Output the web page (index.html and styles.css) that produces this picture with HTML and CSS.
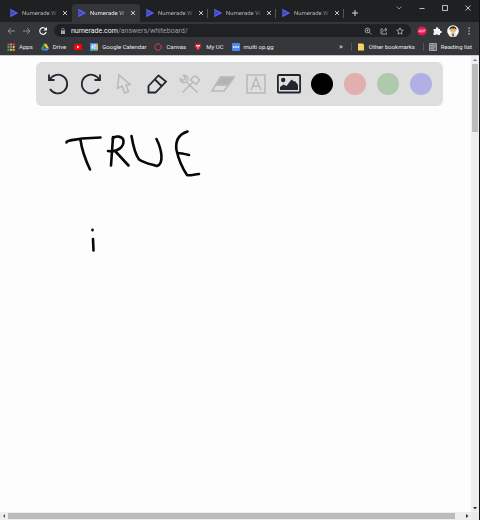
FILE: index.html
```html
<!DOCTYPE html>
<html lang="en">
<head>
<meta charset="utf-8">
<title>Numerade Whiteboard</title>
<link rel="stylesheet" href="styles.css">
</head>
<body>
<svg class="defs" aria-hidden="true">
  <symbol id="logo" viewBox="0 0 10 10"><path d="M1.200 .8v8.400L9.400 5z" fill="#565cf5"/><path d="M.8 3.500l4.500 1.500-4.500 1.500" stroke="#2b2d4a" stroke-width=".5" fill="none"/></symbol>
  <symbol id="close" viewBox="0 0 6 6"><path d="M1 1l4 4M5 1L1 5" stroke="#d8dadd" stroke-width=".9"/></symbol>
</svg>
<div class="browser">
  <header class="chrome">
    <div class="tabstrip">
      <nav class="tabs" aria-label="Tabs">
        <div class="tab"><svg class="fav"><use href="#logo"/></svg><a href="#" class="name">Numerade W</a><button class="x" aria-label="Close tab"><svg><use href="#close"/></svg></button></div>
        <div class="tab active"><svg class="fav"><use href="#logo"/></svg><a href="#" class="name">Numerade W</a><button class="x" aria-label="Close tab"><svg><use href="#close"/></svg></button></div>
        <div class="tab sep"><svg class="fav"><use href="#logo"/></svg><a href="#" class="name">Numerade W</a><button class="x" aria-label="Close tab"><svg><use href="#close"/></svg></button></div>
        <div class="tab sep"><svg class="fav"><use href="#logo"/></svg><a href="#" class="name">Numerade W</a><button class="x" aria-label="Close tab"><svg><use href="#close"/></svg></button></div>
        <div class="tab sep"><svg class="fav"><use href="#logo"/></svg><a href="#" class="name">Numerade W</a><button class="x" aria-label="Close tab"><svg><use href="#close"/></svg></button></div>
        <button class="new" aria-label="New tab"><svg viewBox="0 0 8 8"><path d="M4 1v6M1 4h6" stroke="#d8dadd"/></svg></button>
      </nav>
      <div class="window">
        <button aria-label="Search tabs"><svg viewBox="0 0 8 8"><path d="M1.500 2.500L4 5l2.500-2.500" stroke="#aaadb0" fill="none" stroke-width=".8"/></svg></button>
        <button aria-label="Minimize"><svg viewBox="0 0 8 8"><path d="M1.500 4.500h5" stroke="#e4e4e4" stroke-width=".8"/></svg></button>
        <button aria-label="Maximize"><svg viewBox="0 0 8 8"><path d="M1.500 1.500h5v5h-5z" stroke="#e4e4e4" fill="none" stroke-width=".8"/></svg></button>
        <button aria-label="Close"><svg viewBox="0 0 8 8"><path d="M1.500 1.500l5 5M6.500 1.500l-5 5" stroke="#eee" stroke-width=".8"/></svg></button>
      </div>
    </div>
    <div class="address">
      <div class="nav">
        <button aria-label="Back"><svg viewBox="0 0 10 10"><path d="M9 5H2M5 2L2 5l3 3" stroke="#8b8d91" fill="none"/></svg></button>
        <button aria-label="Forward"><svg viewBox="0 0 10 10"><path d="M1 5h7M5 2l3 3-3 3" stroke="#8b8d91" fill="none"/></svg></button>
        <button aria-label="Reload"><svg viewBox="0 0 10 10"><path d="M8 3.500A3.300 3.300 0 1 0 8.200 6" stroke="#f1f1f1" fill="none" stroke-width="1.200"/><path d="M9 1v3.500H5.500z" fill="#f1f1f1"/></svg></button>
      </div>
      <div class="omnibox">
        <svg class="i8" viewBox="0 0 8 8"><path d="M2 3.500h4v3.500H2z" fill="#a4a7ab"/><path d="M2.800 4V2.500a1.200 1.200 0 0 1 2.400 0V4" stroke="#a4a7ab" fill="none" stroke-width=".7"/></svg>
        <a href="#" class="url"><b>numerade.com</b>/answers/whiteboard/</a>
        <div class="actions">
          <button aria-label="Zoom"><svg viewBox="0 0 8 8"><circle cx="3.500" cy="3.500" r="2.400" stroke="#b9bcc0" fill="none" stroke-width=".8"/><path d="M5.300 5.300L7.500 7.500M2.300 3.500h2.400M3.500 2.300v2.400" stroke="#b9bcc0" stroke-width=".7"/></svg></button>
          <button aria-label="Share"><svg viewBox="0 0 8 8"><path d="M3 2H1v5h5.500V5.500M2.500 5.500C2.500 3.500 4 2.700 6 2.700M5 1l2 1.700-2 1.800" stroke="#b9bcc0" fill="none" stroke-width=".8"/></svg></button>
          <button aria-label="Bookmark"><svg viewBox="0 0 8 8"><path d="M4 .8l.9 2.200 2.400.2-1.800 1.600.5 2.400L4 6l-2 1.200.5-2.400L.7 3.200l2.400-.2z" stroke="#c9ccd0" fill="none" stroke-width=".7"/></svg></button>
        </div>
      </div>
      <div class="ext">
        <button aria-label="Ad blocker"><svg viewBox="0 0 10 10"><path d="M3 .8h4L9.500 3v4L7 9.200H3L.5 7V3z" fill="#e8174b"/><path d="M2 6.300V4.500l.7-.7.700.7v1.800M2 5.400h1.400M4.400 6.300V3.800h.8l.5.6-.5.600.5.700-.5.600zM6.700 6.300V3.800h1v1.300h-1" stroke="#fff" stroke-width=".5" fill="none"/></svg></button>
        <button aria-label="Extensions"><svg viewBox="0 0 10 10"><path d="M1.500 3H4a1.200 1.200 0 1 1 2.200 0H8v2a1.200 1.200 0 1 1 0 2v2H5.800a1.200 1.200 0 0 0-2.200 0H1.500V6.800a1.100 1.100 0 0 0 0-2z" fill="#f4f4f4"/></svg></button>
        <button class="avatar" aria-label="Profile"><svg viewBox="0 0 12 12"><circle cx="6" cy="6" r="5.800" fill="#fff"/><path d="M2 11c.3-2.500 2-3 4-3s3.700.5 4 3c-2 1.500-6 1.500-8 0z" fill="#eee5d0"/><circle cx="6" cy="5" r="3" fill="#f0bd83"/><path d="M2.500 5C2 0 10 0 9.500 5L8 3.500 4 3.400z" fill="#3a241a"/><path d="M6 8.500v3" stroke="#26211e" stroke-width="1.200"/><path d="M4.700 5h.6M6.700 5h.6" stroke="#4a2c1c" stroke-width=".6"/></svg></button>
        <button aria-label="Menu"><svg viewBox="0 0 10 10"><path d="M4.500 1.500h1.200v1.200H4.500zM4.500 4.400h1.200v1.200H4.500zM4.500 7.300h1.200v1.200H4.500z" fill="#eee"/></svg></button>
      </div>
    </div>
    <nav class="bookmarks" aria-label="Bookmarks">
      <a href="#"><svg viewBox="0 0 8 8"><path d="M.5 .5h2v2h-2z" fill="#e94b3d"/><path d="M3.100 .5h2v2h-2z" fill="#e98b3d"/><path d="M5.700 .5h2v2h-2z" fill="#e94b3d"/><path d="M.5 3.100h2v2h-2zM.5 5.700h2v2h-2z" fill="#3daa5c"/><path d="M3.100 3.100h2v2h-2z" fill="#4c8bf5"/><path d="M5.700 3.100h2v2h-2zM3.100 5.700h2v2h-2zM5.700 5.700h2v2h-2z" fill="#f3bd35"/></svg>Apps</a>
      <a href="#"><svg viewBox="0 0 8 8"><path d="M2.800.7L0 5.500l1.400 2L4.200 3z" fill="#24a466"/><path d="M2.800.7h2.600L8 5.500H5.300z" fill="#fbc52c"/><path d="M2.700 5.500H8L6.700 7.500H1.400z" fill="#4c85ed"/></svg>Drive</a>
      <a href="#" aria-label="YouTube"><svg viewBox="0 0 8 8"><rect y="1" width="8" height="6" rx="1.500" fill="#f00"/><path d="M3 2.600v2.800L5.500 4z" fill="#fff"/></svg></a>
      <a href="#"><svg viewBox="0 0 8 8"><path d="M0 0h8v8H0z" fill="#4285f4"/><path d="M1.500 1.500h5v5h-5z" fill="#fff"/><path d="M6.500 1.500H8v5H6.500z" fill="#fbbc04"/><path d="M1.500 6.500h5V8h-5z" fill="#34a853"/><path d="M2.500 2.500h1.300v3H2.500M5.300 2.500v3.300" stroke="#4285f4" stroke-width=".7" fill="none"/></svg>Google Calendar</a>
      <a href="#"><svg viewBox="0 0 8 8"><circle cx="4" cy="4" r="3.200" fill="none" stroke="#e23b36" stroke-width="1.100" stroke-dasharray="2 .5"/></svg>Canvas</a>
      <a href="#"><svg viewBox="0 0 8 8"><path d="M1 .5h6l.5 3.500L4 8 .5 4z" fill="#c3202e"/><path d="M2 2h4v1.500H2zM3 4.500h2L4 6z" fill="#f7dede"/></svg>My UC</a>
      <a href="#"><svg viewBox="0 0 8 8"><rect width="8" height="8" rx="1" fill="#4e86f5"/><path d="M1 4h1.500M3.200 4h1.600M5.500 4H7" stroke="#fff" stroke-width="1.400"/></svg>multi op.gg</a>
      <span class="more">»</span>
      <a href="#" class="rule"><svg viewBox="0 0 8 8"><path d="M1 .5h4.500l1.500 1V7.500H1z" fill="#fbd467"/><path d="M5.500.5v7" stroke="#e6b53e" stroke-width=".5"/></svg>Other bookmarks</a>
      <a href="#" class="rule"><svg viewBox="0 0 8 8"><path d="M.5.5h7v7h-7z" fill="#686a70" stroke="#b4b7be" stroke-width=".8"/><path d="M4 1v6M1.500 2.500h1.800M1.500 4h1.800M1.500 5.500h1.800M5 2.500h1.500M5 4h1.500" stroke="#d3d6db" stroke-width=".6"/></svg>Reading list</a>
    </nav>
  </header>
  <div class="viewport">
    <main class="board">
      <div class="tools" role="toolbar" aria-label="Whiteboard tools">
        <button aria-label="Undo"><svg viewBox="0 0 24 24"><path d="M3 2.500v5.500h5.500M3.500 8A9.300 9.300 0 1 1 4 17" class="ink"/></svg></button>
        <button aria-label="Redo"><svg viewBox="0 0 24 24"><path d="M21 2.500v5.500h-5.500M20.500 8A9.300 9.300 0 1 0 20 17" class="ink"/></svg></button>
        <button aria-label="Select"><svg viewBox="0 0 24 24"><path d="M7 3L5.500 16.500l4.500-2.500 2.500 7 4-1.500-2.500-6.500 4-.5z" class="dim"/></svg></button>
        <button aria-label="Pen"><svg viewBox="0 0 24 24"><path d="M3.500 20.500v-6.500L13.500 3.500l7.500 6L10.500 20.500zM10 7.500l6.500 6.500" class="ink"/></svg></button>
        <button aria-label="Tools"><svg viewBox="0 0 24 24"><path d="M4.500 20.500L15.500 9.500M12.500 8l3.500-4 3 1 2.500 3-3.500 4.500zM19.500 20.500L9 10.500M2.500 6.500l3 2 2-2-2-3c3.500-.5 5.500 2.500 3.500 6-3.500 2.500-7 .5-6.500-3z" class="dim"/></svg></button>
        <button aria-label="Eraser"><svg viewBox="0 0 24 24"><path d="M9.500 4.500h14l-6.500 9H4z" fill="#b2b4b4"/><path d="M9.500 5h14L13 19H.9L9.500 5M4 13h13" class="dim"/></svg></button>
        <button aria-label="Text"><svg viewBox="0 0 24 24"><path d="M3 3h18v18H3zM7 18l5-12 5 12M9 14h6" class="dim"/></svg></button>
        <button aria-label="Image"><svg viewBox="0 0 24 24"><rect x=".9" y="3" width="22.200" height="17.500" rx="1" class="ink"/><circle cx="6.200" cy="8" r="2.200" fill="#20262e"/><path d="M3 18v-3l3.500-2.500 3 1.500 5-6.500 2.500 2 1-.5 3 4V18z" fill="#20262e"/></svg></button>
        <button class="swatch black" aria-label="Black"></button>
        <button class="swatch red" aria-label="Red"></button>
        <button class="swatch green" aria-label="Green"></button>
        <button class="swatch blue" aria-label="Blue"></button>
      </div>
      <svg class="canvas" viewBox="0 0 150 140" role="img" aria-label="TRUE i">
        <path d="M6.500 22.500C6.500 20 15 20 22 18.500L40.500 17.500M20.500 20C22 31 26 41 30 49.500M53 17L51 45.500M48 31C58 33 64 26 63.500 21C63 16 55 15 52.500 19M56 32L68.500 45.500M71.500 16C73 25 75 34 79 39.500C84 43 90 44 97 46C104 44 102 30 96.500 19M127.500 11.500C120 14 115 20 116.500 30C119 42 123 49 127 55C130 56 135 54 139 54M117.500 33C121 33 125 34 129 35M33 119L33.500 130.500M32.500 109.800v.4"/>
      </svg>
    </main>
    <div class="vbar"><svg viewBox="0 0 8 8"><path d="M2 5h4L4 3z" fill="#777"/></svg><i class="thumb"></i><svg viewBox="0 0 8 8"><path d="M2 3h4L4 5.500z" fill="#333"/></svg></div>
    <div class="hbar"><svg viewBox="0 0 8 8"><path d="M5 2v4L3 4z" fill="#555"/></svg><i class="thumb"></i><svg viewBox="0 0 8 8"><path d="M3 2v4l2.500-2z" fill="#333"/></svg></div>
    <div class="corner"></div>
  </div>
</div>
</body>
</html>
```
FILE: styles.css
```css
* { box-sizing: border-box; }
body { margin: 0; font: 6px/8px Roboto, "Open Sans", sans-serif; color: #e6e7e9; }
button { margin: 0; padding: 0; border: 0; background: none; display: block; flex: none; }
a { color: inherit; text-decoration: none; }
svg { display: block; flex: none; }
.defs { position: absolute; width: 0; height: 0; }

.browser { display: flex; flex-direction: column; height: 100vh; border-right: 1px solid #111214; }
.chrome { background: #35363a; border-bottom: 1px solid #c9c9ca; }

.tabstrip { display: flex; justify-content: space-between; height: 22px; background: #1e2022; }
.tabs { display: flex; align-items: flex-end; padding-left: 4px; }
.tab { display: flex; align-items: center; width: 68px; height: 18px; padding: 0 4px 0 5px; border-radius: 4px 4px 0 0; color: #aeb0b4; }
.active { background: #35363a; color: #e6e7e9; }
.sep { background: linear-gradient(#54565a, #54565a) right center / 1px 9px no-repeat; }
.fav { width: 10px; height: 10px; margin-right: 3px; }
.name { width: 37px; overflow: hidden; white-space: nowrap; -webkit-mask-image: linear-gradient(90deg, #000 75%, transparent); mask-image: linear-gradient(90deg, #000 75%, transparent); }
.x { margin-left: auto; }
.x svg { width: 6px; height: 6px; }
.new { align-self: center; margin: 4px 0 0 7px; }
.new svg, .window svg { width: 8px; height: 8px; }
.window { display: flex; align-items: center; gap: 15px; padding: 0 7px 6px 0; }

.address { display: flex; align-items: center; height: 17px; padding: 0 5px 0 6px; }
.nav { display: flex; gap: 6px; width: 48px; }
.nav svg, .ext svg { width: 10px; height: 10px; }
.omnibox { display: flex; align-items: center; flex: 1; height: 13px; padding: 0 7px 0 5px; border-radius: 7px; background: #202124; }
.i8 { width: 8px; height: 8px; margin-right: 4px; }
.url { font-size: 7px; color: #9a9da1; }
.url b { font-weight: 400; color: #f0f1f2; }
.actions { display: flex; gap: 8px; margin-left: auto; }
.actions svg { width: 8px; height: 8px; }
.ext { display: flex; align-items: center; gap: 5px; margin-left: 6px; }
.ext .avatar svg { width: 12px; height: 12px; }

.bookmarks { display: flex; align-items: center; height: 16px; padding: 0 7px; gap: 8px; white-space: nowrap; }
.bookmarks a { display: flex; align-items: center; gap: 4px; }
.bookmarks svg { width: 8px; height: 8px; }
.more { margin-left: auto; font-size: 8px; }
.rule { padding-left: 5px; border-left: 1px solid #54565a; }

.viewport { flex: 1; display: grid; grid-template: 1fr 8px / 1fr 8px; min-height: 0; background: #fdfdfd; }
.board { min-width: 0; overflow: hidden; padding: 6px 28px 0 36px; }
.tools { display: flex; align-items: center; justify-content: space-between; height: 44px; padding: 0 10px; border-radius: 6px; background: #dedede; }
.tools svg { width: 24px; height: 24px; }
.ink { fill: none; stroke: #20262e; stroke-width: 1.8; }
.dim { fill: none; stroke: #b8baba; stroke-width: 1.5; }
.swatch { width: 22px; height: 22px; margin: 0 1px; border-radius: 50%; }
.black { background: #000; }
.red { background: #e3aeae; }
.green { background: #adcaae; }
.blue { background: #b0b0e3; }
.canvas { width: 150px; height: 140px; margin: 14px 0 0 24px; fill: none; stroke: #080808; stroke-width: 2.6; stroke-linecap: round; stroke-linejoin: round; }

.vbar, .hbar { display: flex; background: #eeeeef; }
.vbar { flex-direction: column; justify-content: space-between; }
.vbar svg, .hbar svg { width: 8px; height: 8px; }
.thumb { background: #bcbcbc; }
.vbar .thumb { height: 15%; margin: 0 1px auto; }
.hbar .thumb { flex: 1; margin: 1px 8px 1px 0; }
.corner { background: #e9e9e9; }
```
